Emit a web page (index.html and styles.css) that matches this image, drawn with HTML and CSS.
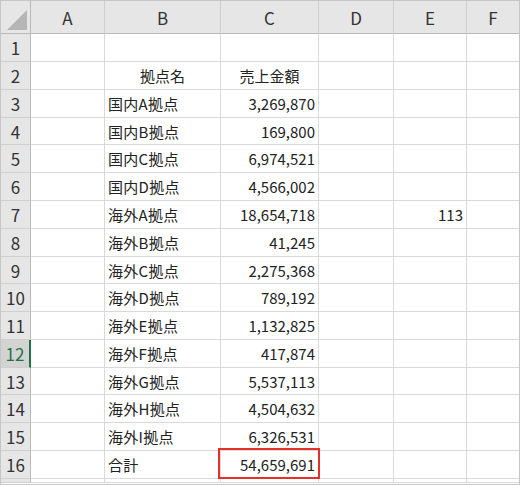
FILE: index.html
```html
<!DOCTYPE html>
<html lang="ja">
<head>
<meta charset="utf-8">
<link rel="stylesheet" href="styles.css">
</head>
<body>
<div class="sheet">
  <div class="grid">
    <div class="hd corner"><span class="tri"></span></div>
    <div class="hd col">A</div>
    <div class="hd col">B</div>
    <div class="hd col">C</div>
    <div class="hd col">D</div>
    <div class="hd col">E</div>
    <div class="hd col last">F</div>

    <div class="rh r28">1</div><div class="c"></div><div class="c"></div><div class="c"></div><div class="c"></div><div class="c"></div><div class="c"></div>
    <div class="rh r28">2</div><div class="c"></div><div class="c ctr">拠点名</div><div class="c ctr">売上金額</div><div class="c"></div><div class="c"></div><div class="c"></div>
    <div class="rh r28">3</div><div class="c"></div><div class="c txt">国内A拠点</div><div class="c num">3,269,870</div><div class="c"></div><div class="c"></div><div class="c"></div>
    <div class="rh r27">4</div><div class="c"></div><div class="c txt">国内B拠点</div><div class="c num">169,800</div><div class="c"></div><div class="c"></div><div class="c"></div>
    <div class="rh r28">5</div><div class="c"></div><div class="c txt">国内C拠点</div><div class="c num">6,974,521</div><div class="c"></div><div class="c"></div><div class="c"></div>
    <div class="rh r28">6</div><div class="c"></div><div class="c txt">国内D拠点</div><div class="c num">4,566,002</div><div class="c"></div><div class="c"></div><div class="c"></div>
    <div class="rh r28">7</div><div class="c"></div><div class="c txt">海外A拠点</div><div class="c num">18,654,718</div><div class="c"></div><div class="c num">113</div><div class="c"></div>
    <div class="rh r28">8</div><div class="c"></div><div class="c txt">海外B拠点</div><div class="c num">41,245</div><div class="c"></div><div class="c"></div><div class="c"></div>
    <div class="rh r27">9</div><div class="c"></div><div class="c txt">海外C拠点</div><div class="c num">2,275,368</div><div class="c"></div><div class="c"></div><div class="c"></div>
    <div class="rh r28">10</div><div class="c"></div><div class="c txt">海外D拠点</div><div class="c num">789,192</div><div class="c"></div><div class="c"></div><div class="c"></div>
    <div class="rh r28">11</div><div class="c"></div><div class="c txt">海外E拠点</div><div class="c num">1,132,825</div><div class="c"></div><div class="c"></div><div class="c"></div>
    <div class="rh r28 sel">12</div><div class="c"></div><div class="c txt">海外F拠点</div><div class="c num">417,874</div><div class="c"></div><div class="c"></div><div class="c"></div>
    <div class="rh r27">13</div><div class="c"></div><div class="c txt">海外G拠点</div><div class="c num">5,537,113</div><div class="c"></div><div class="c"></div><div class="c"></div>
    <div class="rh r28">14</div><div class="c"></div><div class="c txt">海外H拠点</div><div class="c num">4,504,632</div><div class="c"></div><div class="c"></div><div class="c"></div>
    <div class="rh r28">15</div><div class="c"></div><div class="c txt">海外I拠点</div><div class="c num">6,326,531</div><div class="c"></div><div class="c"></div><div class="c"></div>
    <div class="rh r28">16</div><div class="c"></div><div class="c txt">合計</div><div class="c num total">54,659,691<span class="redbox"></span></div><div class="c"></div><div class="c"></div><div class="c"></div>
    <div class="rh r4"></div><div class="c"></div><div class="c"></div><div class="c"></div><div class="c"></div><div class="c"></div><div class="c"></div>
  </div>
</div>
</body>
</html>
```

FILE: styles.css
```css
html, body {
  margin: 0;
  padding: 0;
  background: #ffffff;
}

.sheet {
  width: 520px;
  height: 485px;
  box-sizing: border-box;
  border: 1px solid #c6c6c6;
  overflow: hidden;
  font-family: "Noto Sans CJK JP", "Noto Sans", sans-serif;
  color: #222;
}

.grid {
  display: grid;
  grid-template-columns: 30px 74px 116px 98px 75px 73px 53px;
  grid-auto-rows: auto;
}

.hd {
  height: 33px;
  box-sizing: border-box;
  background: #e6e6e6;
  border-bottom: 1px solid #b9b9b9;
  border-right: 1px solid #cfcfcf;
  display: flex;
  align-items: center;
  justify-content: center;
  font-size: 17px;
  color: #333;
}

.hd.col {
  padding-top: 1px;
}

.corner {
  position: relative;
  border-right: 1px solid #b9b9b9;
}

.tri {
  position: absolute;
  right: 3px;
  bottom: 3px;
  width: 0;
  height: 0;
  border-left: 20px solid transparent;
  border-bottom: 20px solid #b5b5b5;
}

.rh {
  box-sizing: border-box;
  background: #e6e6e6;
  border-right: 1px solid #b9b9b9;
  border-bottom: 1px solid #cfcfcf;
  display: flex;
  align-items: center;
  justify-content: center;
  font-size: 17px;
  color: #333;
}

.rh.sel {
  background: #d3d3d3;
  color: #217346;
  border-right: 2px solid #217346;
}

.r28 { height: 28px; }
.r27 { height: 27px; }
.r4 { height: 4px; }

.c {
  box-sizing: border-box;
  border-right: 1px solid #d9d9d9;
  border-bottom: 1px solid #d9d9d9;
  display: flex;
  align-items: center;
  font-size: 15px;
  white-space: nowrap;
  min-width: 0;
}

.ctr {
  justify-content: center;
}

.txt {
  justify-content: flex-start;
  padding-left: 3px;
  letter-spacing: 0.3px;
}

.num {
  justify-content: flex-end;
  padding-right: 3px;
}

.total {
  position: relative;
}

.redbox {
  position: absolute;
  left: -3px;
  top: -3px;
  right: -2px;
  bottom: -1px;
  border: 2px solid #e2302a;
  pointer-events: none;
}
```
